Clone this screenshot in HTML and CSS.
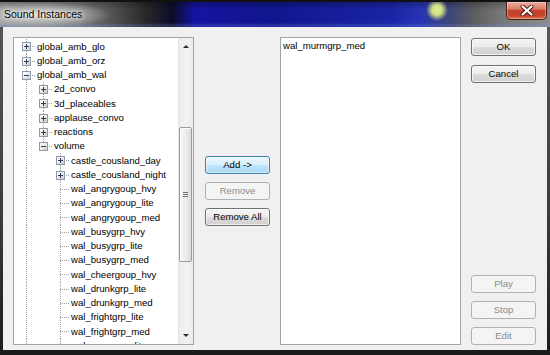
FILE: index.html
```html
<!DOCTYPE html>
<html>
<head>
<meta charset="utf-8">
<link rel="stylesheet" href="styles.css">
</head>
<body>
<div class="window">
  <div class="titlebar">
    <span class="title">Sound Instances</span>
    <button class="close" aria-label="Close">
      <svg width="14" height="11" viewBox="0 0 14 11">
        <path d="M2.5 1.5 L11.5 9.5 M11.5 1.5 L2.5 9.5" stroke="#4a1a14" stroke-width="4" stroke-linecap="round"/>
        <path d="M2.5 1.5 L11.5 9.5 M11.5 1.5 L2.5 9.5" stroke="#ffffff" stroke-width="2.2" stroke-linecap="round"/>
      </svg>
    </button>
  </div>
  <div class="client">
    <div class="tree">
      <div class="rows">
        <div class="row"><span class="g tee"><span class="box plus"></span></span><span class="lbl">global_amb_glo</span></div>
        <div class="row"><span class="g tee"><span class="box plus"></span></span><span class="lbl">global_amb_orz</span></div>
        <div class="row"><span class="g tee"><span class="box minus"></span></span><span class="lbl">global_amb_wal</span></div>
        <div class="row"><span class="g pipe"></span><span class="g tee"><span class="box plus"></span></span><span class="lbl">2d_convo</span></div>
        <div class="row"><span class="g pipe"></span><span class="g tee"><span class="box plus"></span></span><span class="lbl">3d_placeables</span></div>
        <div class="row"><span class="g pipe"></span><span class="g tee"><span class="box plus"></span></span><span class="lbl">applause_convo</span></div>
        <div class="row"><span class="g pipe"></span><span class="g tee"><span class="box plus"></span></span><span class="lbl">reactions</span></div>
        <div class="row"><span class="g pipe"></span><span class="g elbow"><span class="box minus"></span></span><span class="lbl">volume</span></div>
        <div class="row"><span class="g pipe"></span><span class="g"></span><span class="g tee"><span class="box plus"></span></span><span class="lbl">castle_cousland_day</span></div>
        <div class="row"><span class="g pipe"></span><span class="g"></span><span class="g tee"><span class="box plus"></span></span><span class="lbl">castle_cousland_night</span></div>
        <div class="row"><span class="g pipe"></span><span class="g"></span><span class="g tee"></span><span class="lbl">wal_angrygoup_hvy</span></div>
        <div class="row"><span class="g pipe"></span><span class="g"></span><span class="g tee"></span><span class="lbl">wal_angrygoup_lite</span></div>
        <div class="row"><span class="g pipe"></span><span class="g"></span><span class="g tee"></span><span class="lbl">wal_angrygoup_med</span></div>
        <div class="row"><span class="g pipe"></span><span class="g"></span><span class="g tee"></span><span class="lbl">wal_busygrp_hvy</span></div>
        <div class="row"><span class="g pipe"></span><span class="g"></span><span class="g tee"></span><span class="lbl">wal_busygrp_lite</span></div>
        <div class="row"><span class="g pipe"></span><span class="g"></span><span class="g tee"></span><span class="lbl">wal_busygrp_med</span></div>
        <div class="row"><span class="g pipe"></span><span class="g"></span><span class="g tee"></span><span class="lbl">wal_cheergoup_hvy</span></div>
        <div class="row"><span class="g pipe"></span><span class="g"></span><span class="g tee"></span><span class="lbl">wal_drunkgrp_lite</span></div>
        <div class="row"><span class="g pipe"></span><span class="g"></span><span class="g tee"></span><span class="lbl">wal_drunkgrp_med</span></div>
        <div class="row"><span class="g pipe"></span><span class="g"></span><span class="g tee"></span><span class="lbl">wal_frightgrp_lite</span></div>
        <div class="row"><span class="g pipe"></span><span class="g"></span><span class="g tee"></span><span class="lbl">wal_frightgrp_med</span></div>
        <div class="row"><span class="g pipe"></span><span class="g"></span><span class="g tee"></span><span class="lbl">wal_murmgrp_lite</span></div>
      </div>
      <div class="vscroll">
        <div class="sarrow"><span class="tri up"></span></div>
        <div class="track">
          <div class="thumb"><span class="grip"></span></div>
        </div>
        <div class="sarrow"><span class="tri down"></span></div>
      </div>
    </div>
    <div class="mid">
      <button class="btn default">Add -&gt;</button>
      <button class="btn" disabled>Remove</button>
      <button class="btn">Remove All</button>
    </div>
    <div class="list">
      <div class="item">wal_murmgrp_med</div>
    </div>
    <div class="side">
      <button class="btn">OK</button>
      <button class="btn gap9">Cancel</button>
      <div class="spacer"></div>
      <button class="btn" disabled>Play</button>
      <button class="btn" disabled>Stop</button>
      <button class="btn" disabled>Edit</button>
    </div>
  </div>
</div>
</body>
</html>
```

FILE: styles.css
```css
* { box-sizing: border-box; }
html, body { margin: 0; padding: 0; }
body {
  width: 550px;
  height: 355px;
  overflow: hidden;
  background: #1c1c1c;
  font-family: "Liberation Sans", Arial, sans-serif;
}
.window {
  width: 550px;
  height: 355px;
  background: linear-gradient(to bottom, #5a5a5a 0, #3c3c3c 60%, #1a1a1a 100%);
  display: flex;
  flex-direction: column;
}
.titlebar {
  height: 27px;
  flex: none;
  display: flex;
  align-items: flex-start;
  border-top: 2px solid #111;
  background:
    radial-gradient(ellipse 70px 13px at 42px 13px, rgba(230,230,230,0.85), rgba(200,200,200,0) 100%),
    radial-gradient(circle 11px at 437px 8px, #dcec98 0, #cfe082 45%, rgba(120,140,60,0) 100%),
    linear-gradient(to bottom, rgba(0,0,0,0.25) 0, rgba(0,0,0,0) 8px, rgba(0,0,0,0) 21px, rgba(120,140,220,0.35) 24px, rgba(0,0,0,0) 25px),
    linear-gradient(to right, #9a9a9a 0, #7a7a7a 80px, #2a2a2a 145px, #0c0c28 172px, #1414a2 195px, #10168e 270px, #1a24a6 390px, #2634b4 420px, #3e4676 450px, #5e5e5e 475px, #7a7a7a 505px, #8c8c8c 550px);
}
.title {
  margin: 4px 0 0 4px;
  font-family: "Liberation Sans", Arial, sans-serif;
  font-size: 10.5px;
  line-height: 16px;
  color: #000;
  text-shadow: 0 0 6px #fff, 0 0 3px #fff;
}
.close {
  margin: 0 3px 0 auto;
  width: 41px;
  height: 18px;
  padding: 0;
  border: 1px solid #4a1c16;
  border-top: none;
  border-radius: 0 0 5px 5px;
  background: linear-gradient(to bottom, #e9a99b 0, #dc7f6c 40%, #c2442f 50%, #c5442c 80%, #e07050 100%);
  box-shadow: inset 0 0 0 1px rgba(255,255,255,0.35);
  display: flex;
  align-items: center;
  justify-content: center;
}
.close svg { display: block; }

.client {
  flex: none;
  height: 323px;
  margin: 0 3px;
  background: #f0f0f0;
  display: flex;
  align-items: flex-start;
  padding: 10px 0 0 10px;
  font-size: 9.6px;
  color: #000;
}

/* tree */
.tree {
  width: 181px;
  height: 308px;
  flex: none;
  border: 1px solid #a3a3a3;
  background: #fff;
  display: flex;
}
.rows {
  width: 164px;
  flex: none;
  overflow: hidden;
  padding: 1px 0 0 4px;
}
.row {
  height: 14px;
  display: flex;
  align-items: stretch;
  white-space: nowrap;
}
.row:nth-child(4n+1) { height: 15px; }
.g {
  width: 17px;
  flex: none;
  display: flex;
  align-items: center;
  padding-left: 4px;
  background-repeat: no-repeat;
}
.pipe, .tee {
  background-image: repeating-linear-gradient(to bottom, #a0a0a0 0 1px, transparent 1px 2px);
  background-size: 1px 100%;
  background-position: 8px 0;
}
.tee {
  background-image:
    repeating-linear-gradient(to right, #a0a0a0 0 1px, transparent 1px 2px),
    repeating-linear-gradient(to bottom, #a0a0a0 0 1px, transparent 1px 2px);
  background-size: 9px 1px, 1px 100%;
  background-position: 8px 7px, 8px 0;
}
.elbow {
  background-image:
    repeating-linear-gradient(to right, #a0a0a0 0 1px, transparent 1px 2px),
    repeating-linear-gradient(to bottom, #a0a0a0 0 1px, transparent 1px 2px);
  background-size: 9px 1px, 1px 7px;
  background-position: 8px 7px, 8px 0;
}
.box {
  width: 9px;
  height: 9px;
  border: 1px solid #8f9ba8;
  background-repeat: no-repeat;
}
.plus {
  background:
    linear-gradient(#2d3a55, #2d3a55) 1px 3px / 5px 1px no-repeat,
    linear-gradient(#2d3a55, #2d3a55) 3px 1px / 1px 5px no-repeat,
    linear-gradient(135deg, #ffffff 0, #f2f2f2 40%, #c9c9c9 100%);
}
.minus {
  background:
    linear-gradient(#2d3a55, #2d3a55) 1px 3px / 5px 1px no-repeat,
    linear-gradient(135deg, #ffffff 0, #f2f2f2 40%, #c9c9c9 100%);
}
.lbl {
  margin-left: 1px;
  padding: 0 1px;
  line-height: 14px;
  display: flex;
  align-items: center;
}

/* scrollbar */
.vscroll {
  width: 15px;
  flex: none;
  display: flex;
  flex-direction: column;
  background: linear-gradient(to right, #e2e2e2 0, #eeeeee 2px, #f2f2f2 60%, #ebebeb 100%);
}
.sarrow {
  height: 17px;
  flex: none;
  display: flex;
  align-items: center;
  justify-content: center;
}
.tri {
  width: 0;
  height: 0;
  border-left: 3px solid transparent;
  border-right: 3px solid transparent;
}
.tri.up { border-bottom: 3px solid #2c2c2c; }
.tri.down { border-top: 3px solid #2c2c2c; }
.track {
  flex: 1;
  padding: 72px 1px 0 1px;
}
.thumb {
  height: 135px;
  border: 1px solid #9b9b9b;
  border-radius: 2px;
  background: linear-gradient(to right, #f6f6f6 0, #ededed 50%, #dadada 100%);
  box-shadow: inset 1px 1px 0 #fff;
  display: flex;
  align-items: center;
  justify-content: center;
}
.grip {
  width: 5px;
  height: 5px;
  background: repeating-linear-gradient(to bottom, #6e6e6e 0 1px, transparent 1px 2px);
}

/* middle column */
.mid {
  width: 65px;
  flex: none;
  margin: 119px 0 0 11px;
  display: flex;
  flex-direction: column;
  gap: 8px;
}
.btn {
  height: 18px;
  width: 65px;
  padding: 0;
  border: 1px solid #707070;
  border-radius: 3px;
  background: linear-gradient(to bottom, #f4f4f4 0, #ececec 48%, #dcdcdc 52%, #d0d0d0 100%);
  box-shadow: inset 0 0 0 1px rgba(255,255,255,0.7);
  font-family: "Liberation Sans", Arial, sans-serif;
  font-size: 9.6px;
  color: #000;
  line-height: 16px;
  text-align: center;
}
.btn.default {
  border-color: #3c7fb1;
  background: linear-gradient(to bottom, #eaf6fd 0, #d9f0fc 48%, #bee6fd 52%, #a7d9f5 100%);
  box-shadow: inset 0 0 0 1px rgba(255,255,255,0.6);
}
.btn:disabled {
  border-color: #adb2b5;
  background: #f4f4f4;
  box-shadow: none;
  color: #8b8b8b;
}

/* list */
.list {
  width: 181px;
  height: 308px;
  flex: none;
  margin-left: 10px;
  border: 1px solid #a3a3a3;
  background: #fff;
  padding: 1px 2px;
}
.item {
  height: 14px;
  line-height: 14px;
  white-space: nowrap;
}

/* right buttons */
.side {
  width: 65px;
  height: 307px;
  flex: none;
  margin: 1px 0 0 10px;
  display: flex;
  flex-direction: column;
  gap: 8px;
}
.side .gap9 { margin-top: 1px; }
.spacer { flex: 1; }
```
